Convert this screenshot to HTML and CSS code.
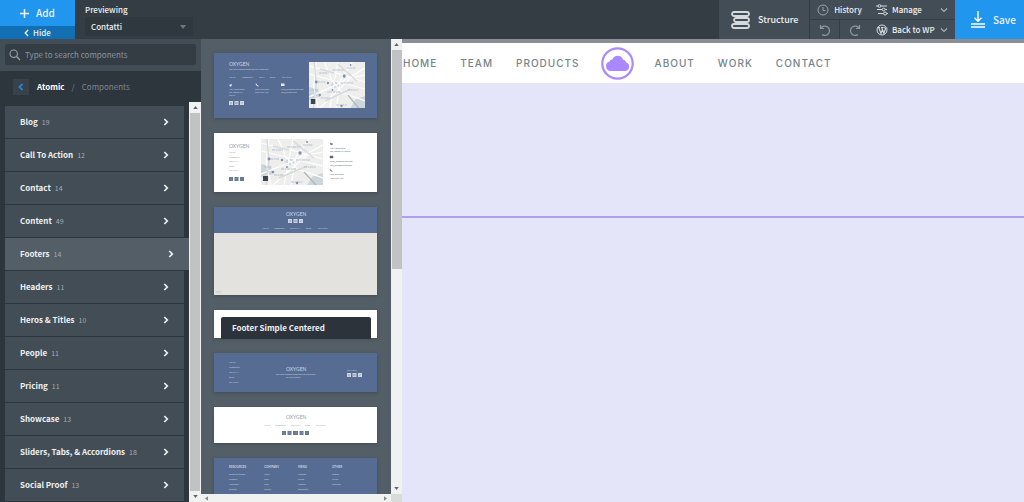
FILE: index.html
```html
<!DOCTYPE html>
<html lang="en">
<head>
<meta charset="utf-8">
<title>Page builder</title>
<link rel="stylesheet" href="styles.css">
</head>
<body>
<svg class="defs" aria-hidden="true">
  <defs>
    <symbol id="chev" viewBox="0 0 6 8"><path d="M1.3 1l3 3-3 3" fill="none" stroke="currentColor" stroke-width="1.7"/></symbol>
    <symbol id="down" viewBox="0 0 8 6"><path d="M1 1.5l3 3 3-3" fill="none" stroke="currentColor" stroke-width="1.1"/></symbol>
    <symbol id="map" viewBox="0 0 62 46" preserveAspectRatio="none">
      <rect width="62" height="46" fill="#eeefed"/>
      <path d="M46 46l6-9 10-3v12zM24 23l5-6 6 8-9 1zM0 25l10 2 2 8-12 3z" fill="#ccd6dc"/>
      <path d="M8 0L5 24l5 22M0 12l62 15M0 35l30-12L62 6M17 0l8 18 13 14M32 0l-9 46M48 0L35 18l-5 28M12 46l34-30 16-3M0 4l34 8 28 8M36 30l26 9" fill="none" stroke="#fff" stroke-width="1.2"/>
      <path d="M6 0l2 23-3 23M18 39l28-12M32 2l21 17M12 7l16 4" fill="none" stroke="#d8d9d8" stroke-width="1.5"/>
      <path d="M43 33l12 13" stroke="#aeb3b7" stroke-width="1.2"/>
      <path d="M11 11h11M26 8h13M42 6h10M9 20h9M35 21h14M20 30h15M43 28h12M13 36h10M30 43h12M3 28h7" stroke="#b3bfd1" stroke-width="1" stroke-dasharray="3 .6 2 .4"/>
      <g fill="#7d91ad"><circle cx="39" cy="14" r="1.7"/><circle cx="8" cy="20" r="1.4"/><circle cx="21" cy="21" r="1.2"/><circle cx="46" cy="3" r="1"/><circle cx="26" cy="28" r="1"/><circle cx="12" cy="33" r="1.3"/><circle cx="36" cy="44" r="1.2"/></g>
      <rect x="2" y="37" width="5" height="5" fill="#384755"/>
    </symbol>
    <symbol id="soc" viewBox="0 0 15 4"><path d="M0 0h4v4H0zM5.5 0h4v4h-4zM11 0h4v4h-4z" fill="currentColor"/><path d="M2 1v2.500M1.300 2h1.400M6.700 1.200h1.600v1.600H6.700zM12 2.700l2-1.500" stroke="#8793aa" stroke-width=".6" fill="none"/></symbol>
  </defs>
</svg>

<header class="topbar">
  <div class="add">
    <button class="add-btn"><svg width="9" height="9" viewBox="0 0 9 9"><path d="M4.500 0v9M0 4.500h9" stroke="currentColor" stroke-width="1.500"/></svg>Add</button>
    <button class="hide-btn"><svg width="5" height="8" viewBox="0 0 5 8"><path d="M4 1L1.300 4 4 7" fill="none" stroke="currentColor" stroke-width="1.400"/></svg>Hide</button>
  </div>
  <div class="previewing">
    <label for="page">Previewing</label>
    <div class="select-wrap"><select id="page"><option>Contatti</option></select><svg width="6" height="4" viewBox="0 0 6 4"><path d="M0 0h6L3 4z" fill="#6d7881"/></svg></div>
  </div>
  <button class="structure"><svg width="20" height="18" viewBox="0 0 20 18"><g fill="none" stroke="#d5dade" stroke-width="1.800"><rect x="1" y="1" width="17" height="4" rx="2"/><rect x="3" y="7" width="15" height="4" rx="2"/><rect x="1" y="13" width="17" height="4" rx="2"/></g></svg>Structure</button>
  <div class="history">
    <button class="hist"><svg width="12" height="12" viewBox="0 0 12 12"><g fill="none" stroke="#98a1a8"><circle cx="6" cy="6" r="5"/><path d="M6 3v3.500h2.500"/></g></svg>History</button>
    <button aria-label="Undo"><svg width="12" height="12" viewBox="0 0 12 12"><path d="M1.500 1v3.500H5M1.800 4.300A4.700 4.700 0 1 1 3 10.500" fill="none" stroke="#8e989f" stroke-width="1.200"/></svg></button>
    <button aria-label="Redo"><svg width="12" height="12" viewBox="0 0 12 12"><path d="M10.500 1v3.500H7M10.200 4.300A4.700 4.700 0 1 0 9 10.500" fill="none" stroke="#8e989f" stroke-width="1.200"/></svg></button>
  </div>
  <div class="manage">
    <button><svg width="12" height="12" viewBox="0 0 12 12"><g fill="none" stroke="#d5dade"><path d="M0 2h2M5 2h6M1 5.500h5M9.500 5.500H11M2 9.500h5M10.500 9.500H12"/><circle cx="3.500" cy="2" r="1.400"/><circle cx="7.700" cy="5.500" r="1.400"/><circle cx="9" cy="9.500" r="1.500"/></g></svg><span>Manage</span><svg width="8" height="6"><use href="#down"/></svg></button>
    <button><svg width="12" height="12" viewBox="0 0 12 12"><circle cx="6" cy="6" r="5" fill="none" stroke="#d5dade"/><path d="M2 3.500h2M5 3.500h2.500M2.700 3.500L5 9.500l1.500-4M5.700 3.500l2.200 6 1.600-5-1-1.500" fill="none" stroke="#d5dade" stroke-width="1.100"/></svg><span>Back to WP</span><svg width="8" height="6"><use href="#down"/></svg></button>
  </div>
  <button class="save"><svg width="16" height="17" viewBox="0 0 16 17"><path d="M8 0v10M4.500 6.800L8 10.300l3.500-3.500M1 13h14M1 16h14" fill="none" stroke="#fff" stroke-width="1.400"/></svg>Save</button>
</header>

<main class="workspace">
  <aside class="sidebar">
    <div class="search"><svg width="12" height="12" viewBox="0 0 12 12"><circle cx="4.700" cy="4.700" r="3.700" fill="none" stroke="#98a3ac" stroke-width="1.100"/><path d="M7.500 7.500L11 11" stroke="#98a3ac" stroke-width="1.300"/></svg><input type="text" aria-label="Search components" placeholder="Type to search components"></div>
    <div class="browse">
      <nav class="crumbs"><button aria-label="Back"><svg width="6" height="8" viewBox="0 0 6 8"><path d="M4.500 1L1.500 4l3 3" fill="none" stroke="#1d93ee" stroke-width="1.600"/></svg></button><b>Atomic</b><i>/</i><span>Components</span></nav>
      <div class="cats">
        <button>Blog<small>19</small><svg><use href="#chev"/></svg></button>
        <button>Call To Action<small>12</small><svg><use href="#chev"/></svg></button>
        <button>Contact<small>14</small><svg><use href="#chev"/></svg></button>
        <button>Content<small>49</small><svg><use href="#chev"/></svg></button>
        <button class="active">Footers<small>14</small><svg><use href="#chev"/></svg></button>
        <button>Headers<small>11</small><svg><use href="#chev"/></svg></button>
        <button>Heros &amp; Titles<small>10</small><svg><use href="#chev"/></svg></button>
        <button>People<small>11</small><svg><use href="#chev"/></svg></button>
        <button>Pricing<small>11</small><svg><use href="#chev"/></svg></button>
        <button>Showcase<small>13</small><svg><use href="#chev"/></svg></button>
        <button>Sliders, Tabs, &amp; Accordions<small>18</small><svg><use href="#chev"/></svg></button>
        <button>Social Proof<small>13</small><svg><use href="#chev"/></svg></button>
      </div>
    </div>
    <div class="vbar side-bar"><svg viewBox="0 0 6 4"><path d="M0 4h6L3 0z"/></svg><div class="thumb"></div><svg viewBox="0 0 6 4"><path d="M0 0h6L3 4z"/></svg></div>
  </aside>

  <section class="designs">
    <div class="cards">
      <svg class="card blue" viewBox="0 0 163 65">
        <g class="tiny light"><text class="brand" x="15" y="13">OXYGEN</text><text x="15" y="17">The visual website design tool for WordPress</text>
        <text x="15" y="25">HOME</text><text x="28" y="25">PRODUCTS</text><text x="45" y="25">TEAM</text><text x="56" y="25">BLOG</text><text x="68" y="25">CONTACT</text>
        <text x="15" y="37">1234 Street Road</text><text x="15" y="40">Los Angeles, CA</text><text x="15" y="43">90210</text><text x="41" y="37">(555) 555-5555</text><text x="41" y="40">(555) 555-1234</text><text x="67" y="37">hello@oxygenbuilder.com</text><text x="67" y="40">info@oxygen.com</text></g>
        <path d="M15 32l3-1-1 3zM67 30.500h3.500v2.500H67z" fill="#e5ebf3"/><path d="M42 30.500q0 2.500 2.500 2.500" stroke="#e5ebf3" fill="none"/>
        <use href="#soc" x="15" y="48" width="15" height="4" color="#d0d7e2"/>
        <use href="#map" x="95" y="9" width="56" height="46"/>
      </svg>
      <svg class="card white" viewBox="0 0 163 59">
        <g class="tiny gray"><text class="brand" x="15" y="15">OXYGEN</text><text x="15" y="20">HOME</text><text x="15" y="25">PRODUCTS</text><text x="15" y="29">COMPANY</text><text x="15" y="34">BLOG</text><text x="15" y="38">CONTACT</text></g>
        <g class="tiny dark"><text x="116" y="16">1234 Street Road</text><text x="116" y="19">Los Angeles, CA 90210</text><text x="116" y="29">hello@oxygenbuilder.com</text><text x="116" y="33">info@oxygenbuilder.com</text><text x="116" y="42">(555) 555-5555</text><text x="116" y="46">(555) 555-1234</text></g>
        <path d="M116 10l3 1-2 1zM116 23h3v2h-3zM116 36q0 2 2.500 2.500" fill="#5d6a7a" stroke="#5d6a7a" stroke-width=".5"/>
        <use href="#soc" x="15" y="44" width="15" height="4" color="#657892"/>
        <use href="#map" x="47" y="6" width="62" height="46"/>
      </svg>
      <svg class="card sand" viewBox="0 0 163 88">
        <rect width="163" height="26" fill="#566c92"/>
        <g class="tiny light"><text class="brand" x="72" y="9">OXYGEN</text><text x="48" y="22">HOME</text><text x="60" y="22">PRODUCTS</text><text x="76" y="22">COMPANY</text><text x="92" y="22">BLOG</text><text x="104" y="22">CONTACT</text></g>
        <use href="#soc" x="74" y="12" width="15" height="4" color="#d0d7e2"/><path d="M2 85h5" stroke="#aebdce" stroke-width=".7"/>
      </svg>
      <div class="card named"><span>Footer Simple Centered</span></div>
      <svg class="card blue" viewBox="0 0 163 39">
        <g class="tiny light"><text x="15" y="10">HOME</text><text x="15" y="15">PRODUCTS</text><text x="15" y="20">COMPANY</text><text x="15" y="25">BLOG</text><text x="15" y="30">CONTACT</text><text class="brand" x="72" y="18">OXYGEN</text><text x="62" y="22">The visual website design tool for WordPress</text><text x="72" y="25">for your website</text><text x="133" y="18">CONNECT</text></g>
        <use href="#soc" x="133" y="20" width="15" height="4" color="#d0d7e2"/>
      </svg>
      <svg class="card white" viewBox="0 0 163 36">
        <g class="tiny gray"><text class="brand" x="72" y="12">OXYGEN</text><text x="50" y="19">HOME</text><text x="61" y="19">PRODUCTS</text><text x="77" y="19">COMPANY</text><text x="91" y="19">BLOG</text><text x="102" y="19">CONTACT</text></g>
        <use href="#soc" x="68" y="24" width="15" height="4" color="#657892"/><use href="#soc" x="80" y="24" width="15" height="4" color="#657892"/>
      </svg>
      <svg class="card blue" viewBox="0 0 163 60">
        <g class="tiny light"><g class="head"><text x="15" y="10">RESOURCES</text><text x="50" y="10">COMPANY</text><text x="84" y="10">MENU</text><text x="118" y="10">OTHER</text></g>
        <text x="15" y="17">Careers at Oxygen</text><text x="15" y="22">Investors</text><text x="15" y="27">Newsroom</text><text x="15" y="32">Business</text><text x="50" y="17">About</text><text x="50" y="22">Team</text><text x="50" y="27">Press</text><text x="50" y="32">Contact</text><text x="84" y="17">Products</text><text x="84" y="22">Pricing</text><text x="84" y="27">Features</text><text x="84" y="32">Documents</text><text x="118" y="17">Support</text><text x="118" y="22">Privacy</text><text x="118" y="27">Resources</text></g>
      </svg>
    </div>
    <div class="hbar"><svg viewBox="0 0 4 6"><path d="M4 0v6L0 3z"/></svg><svg viewBox="0 0 4 6"><path d="M0 0v6l4-3z"/></svg></div>
    <div class="vbar"><svg viewBox="0 0 6 4"><path d="M0 4h6L3 0z"/></svg><div class="thumb"></div><svg viewBox="0 0 6 4"><path d="M0 0h6L3 4z"/></svg></div>
    <div class="corner"></div>
  </section>

  <section class="canvas">
    <nav class="site-nav"><a href="#">HOME</a><a href="#">TEAM</a><a href="#">PRODUCTS</a>
      <svg width="33" height="33" viewBox="0 0 33 33"><circle cx="16.500" cy="16.500" r="15.200" fill="none" stroke="#aa88ff" stroke-width="2.200"/><path d="M9.500 24a4.800 4.800 0 0 1-1-9.400 4 4 0 0 1 3-2.300 5.600 5.600 0 0 1 10.500.2 4.300 4.300 0 0 1 3.300 3A4.400 4.400 0 0 1 24 24z" fill="#aa88ff"/></svg>
      <a href="#">ABOUT</a><a href="#">WORK</a><a href="#">CONTACT</a></nav>
    <div class="section-one"></div>
    <div class="section-two"></div>
  </section>
</main>
</body>
</html>
```
FILE: styles.css
```css
* { box-sizing: border-box; }
body {
  margin: 0;
  height: 100vh;
  display: flex;
  flex-direction: column;
  overflow: hidden;
  background: #2d353d;
  color: #eef1f3;
  font: 8px/16px "Noto Sans CJK SC", "Noto Sans", sans-serif;
}
button, select, input { font: inherit; color: inherit; border: 0; margin: 0; padding: 0; background: none; }
svg { display: block; flex: none; }
.defs { position: absolute; width: 0; height: 0; }

.topbar { display: flex; flex: none; height: 39px; background: #343c44; font-weight: 500; }
.topbar button { display: flex; align-items: center; }
.add { width: 75px; display: flex; flex-direction: column; }
.add button { justify-content: center; }
.add-btn { flex: 1; gap: 7px; background: #2196ef; font-size: 10px; }
.hide-btn { height: 13px; gap: 4px; background: #126fb4; line-height: 13px; }
.previewing { flex: 1; padding: 3px 10px; }
.previewing label { display: block; line-height: 14px; }
.select-wrap { display: flex; align-items: center; width: 108px; height: 19px; padding: 0 7px 0 6px; border-radius: 2px; background: #2f373f; }
.select-wrap select { flex: 1; appearance: none; font-weight: 500; }
.structure { width: 90px; padding-left: 12px; gap: 7px; background: #434d56; }
.topbar .structure { font-size: 9px; }
.history { display: grid; grid-template-columns: 30px 30px; grid-template-rows: 20px 19px; width: 60px; background: #434d56; border-left: 1px solid #343c44; }
.history button { justify-content: center; border-right: 1px solid #343c44; }
.history .hist { grid-column: 1 / 3; gap: 5px; border-bottom: 1px solid #343c44; }
.manage { width: 86px; display: flex; flex-direction: column; background: #434d56; }
.manage button { flex: 1; gap: 4px; padding: 0 7px; }
.manage button + button { border-top: 1px solid #343c44; }
.manage span { flex: 1; text-align: left; white-space: nowrap; }
.manage svg:last-child { color: #aab2b8; }
.save { width: 69px; padding-left: 15px; gap: 7px; background: #2196ef; }
.topbar .save { padding-left: 15px; font-size: 10px; }

.workspace { flex: 1; min-height: 0; display: flex; }
.sidebar { width: 201px; flex: none; display: grid; grid-template: 32px 31px 1fr / 1fr 12px; background: #2d353d; }
.search { grid-column: 1 / 3; display: flex; align-items: center; background: #434d56; padding: 5px 5px 6px; }
.search svg { position: absolute; margin-left: 4px; }
.search input { flex: 1; height: 21px; padding-left: 20px; border-radius: 2px; background: #343c44; }
.search input::placeholder { color: #8a95a0; opacity: 1; }
.browse { grid-row: 2 / 4; grid-column: 1; overflow: hidden; }
.crumbs { display: flex; align-items: center; height: 32px; padding-left: 13px; color: #7d8791; }
.crumbs button { width: 16px; height: 16px; display: flex; align-items: center; justify-content: center; background: #39424b; }
.crumbs b { margin-left: 8px; color: #fff; }
.crumbs i { margin: 0 7px; font-style: normal; }
.cats { display: flex; flex-direction: column; gap: 1px; padding: 3px 5px 0; }
.cats button { display: flex; align-items: center; height: 32px; padding: 0 15px; background: #434d56; font-weight: 700; flex: none; white-space: nowrap; }
.cats small { flex: 1; margin-left: 4px; text-align: left; color: #a3acb4; font-size: 7px; font-weight: 400; }
.cats svg { width: 6px; height: 8px; }
.cats .active { margin-right: -5px; background: #535e67; }
.vbar { display: flex; flex-direction: column; align-items: center; gap: 4px; padding: 4px 0; background: #f0f1f1; }
.vbar svg { width: 5px; height: 3px; fill: #606468; }
.vbar .thumb { flex: 1; width: 10px; background: #c1c3c3; }
.side-bar { grid-column: 2; grid-row: 3; }

.designs { width: 201px; flex: none; display: grid; grid-template: 1fr 8px / 1fr 11px; min-height: 0; background: #535e67; }
.cards { display: flex; flex-direction: column; gap: 15px; padding: 14px 14px 0 13px; overflow: hidden; min-height: 0; }
.card { width: 100%; flex: none; box-shadow: 0 1px 3px #353d4588; }
.blue { background: #566c92; }
.white { background: #fff; }
.sand { background: #e4e2de; }
.named { height: 28px; padding: 7px 6px 0 7px; background: #fff; }
.named span { display: block; padding-left: 11px; border-radius: 2px 2px 0 0; background: #2c333b; line-height: 22px; font-weight: 700; }
.tiny { font-size: 2px; font-family: Lato, sans-serif; }
.tiny .brand { font-size: 5px; }
.light { fill: #cfd8e6; }
.gray { fill: #959ba5; }
.dark { fill: #566270; }
.head { font-weight: 700; font-size: 3px; fill: #c9d3e2; }
.hbar { grid-column: 1; grid-row: 2; display: flex; justify-content: space-between; align-items: center; padding: 0 4px; background: #f0f1f1; }
.hbar svg { width: 3px; height: 5px; fill: #85898d; }
.designs .vbar { grid-column: 2; grid-row: 1; }
.designs .vbar .thumb { flex: none; height: 49%; margin-bottom: auto; }
.corner { background: #d9dbdb; }

.canvas { flex: 1; min-width: 0; display: flex; flex-direction: column; border-top: 4px solid #8c9096; background: #e5e5fa; }
.site-nav { height: 40px; flex: none; display: flex; align-items: center; gap: 23px; padding-left: 1px; background: #fff; }
.site-nav a { color: #76838c; font: 500 10px/16px Inter, sans-serif; letter-spacing: 1px; text-decoration: none; }
.site-nav svg { margin: 0 -2px; }
.section-one { flex: 32; border-bottom: 2px solid #b39cf0; }
.section-two { flex: 68; }
```
